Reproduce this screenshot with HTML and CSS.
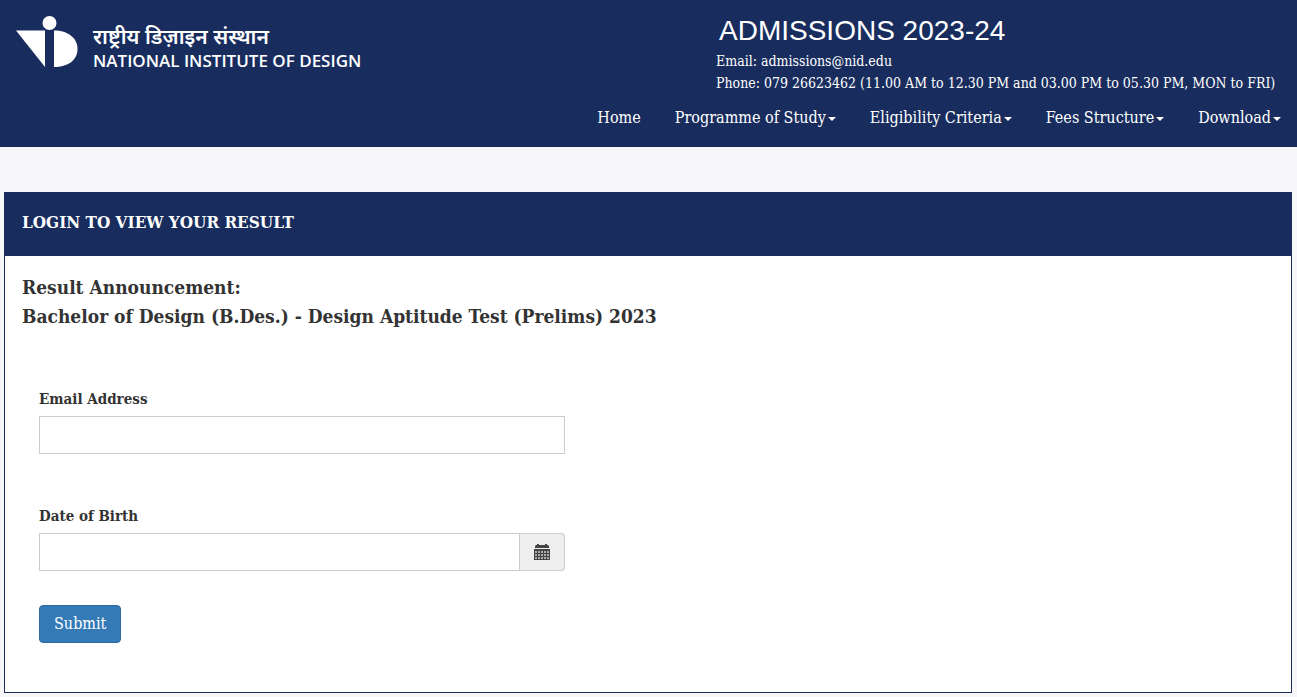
FILE: index.html
```html
<!DOCTYPE html>
<html lang="en">
<head>
  <meta charset="UTF-8" />
  <meta name="viewport" content="width=device-width, initial-scale=1.0"/>
  <title>Admissions 2023-24 - National Institute of Design</title>
  <link rel="stylesheet" href="styles.css">
</head>
<body>
  <header class="site-header">
    <a class="logo" href="#">
      <svg class="logo-mark" viewBox="0 0 62 52" aria-hidden="true">
        <circle cx="33.500" cy="7" r="7"/>
        <path d="M0 14.500H29V51Z"/>
        <path d="M38 14.500C52 14.500 61.500 22 61.500 33S52 51 38 51Z"/>
      </svg>
      <span class="logo-text">
        <span class="logo-hindi" lang="hi">राष्ट्रीय डिज़ाइन संस्थान</span>
        <span class="logo-english">NATIONAL INSTITUTE OF DESIGN</span>
      </span>
    </a>
    <div class="header-right">
      <div class="contact">
        <h1>ADMISSIONS 2023-24</h1>
        <p>Email: admissions@nid.edu</p>
        <p>Phone: 079 26623462 (11.00 AM to 12.30 PM and 03.00 PM to 05.30 PM, MON to FRI)</p>
      </div>
      <nav class="main-nav">
        <a href="#">Home</a>
        <a href="#">Programme of Study<span class="caret"></span></a>
        <a href="#">Eligibility Criteria<span class="caret"></span></a>
        <a href="#">Fees Structure<span class="caret"></span></a>
        <a href="#">Download<span class="caret"></span></a>
      </nav>
    </div>
  </header>

  <main class="panel">
    <h2 class="panel-heading">LOGIN TO VIEW YOUR RESULT</h2>
    <div class="panel-body">
      <h3>Result Announcement:<br>Bachelor of Design (B.Des.) - Design Aptitude Test (Prelims) 2023</h3>
      <form class="login-form">
        <div class="form-group">
          <label for="email">Email Address</label>
          <input type="text" id="email" name="email" />
        </div>
        <div class="form-group">
          <label for="dob">Date of Birth</label>
          <div class="input-group">
            <input type="text" id="dob" name="dob" />
            <button type="button" class="date-btn" aria-label="Choose date">
              <svg viewBox="0 0 16 16" aria-hidden="true">
                <path d="M1 4V2L2 1H3V0H5V1H11V0H13V1H14L15 2V4Z"/>
                <path fill-rule="evenodd" d="M0 5H16V16H0ZM1 7V9H3V7ZM4 7V9H6V7ZM7 7V9H9V7ZM10 7V9H12V7ZM13 7V9H15V7ZM1 10V12H3V10ZM4 10V12H6V10ZM7 10V12H9V10ZM10 10V12H12V10ZM13 10V12H15V10ZM1 13V15H3V13ZM4 13V15H6V13ZM7 13V15H9V13ZM10 13V15H12V13ZM13 13V15H15V13Z"/>
                <path fill-opacity=".4" d="M1 7H15V15H1Z"/>
              </svg>
            </button>
          </div>
        </div>
        <button type="submit" class="btn-primary">Submit</button>
      </form>
    </div>
  </main>
</body>
</html>
```
FILE: styles.css
```css
* { margin: 0; padding: 0; box-sizing: border-box; }

body {
  background-color: #f7f7f9;
  color: #333;
  font-family: "Roboto Slab", "DejaVu Serif Condensed", "DejaVu Serif", serif;
  font-size: 14px;
}

.site-header {
  display: flex;
  justify-content: space-between;
  align-items: flex-start;
  background-color: #182d5e;
  color: white;
  padding: 16px 16px 17px;
}

/* logo */
.logo {
  display: flex;
  gap: 15px;
  color: white;
  text-decoration: none;
  font-family: "Open Sans", "Noto Sans", sans-serif;
}
.logo-mark {
  width: 62px;
  height: 52px;
  fill: white;
}
.logo-text {
  display: flex;
  flex-direction: column;
  padding-top: 6px;
  white-space: nowrap;
}
.logo-hindi {
  font-size: 21px;
  font-weight: 600;
  line-height: 28px;
}
.logo-english {
  font-size: 17px;
  font-weight: 600;
  line-height: 22px;
}

.header-right {
  display: flex;
  flex-direction: column;
  align-items: flex-end;
}
.contact { min-width: 565px; }
.contact h1 {
  padding: 0 3px 4px;
  font-family: "Liberation Sans", Arial, sans-serif;
  font-size: 28px;
  font-weight: normal;
  line-height: 30px;
}
.contact p {
  font-size: 14px;
  line-height: 22px;
}

.main-nav {
  display: flex;
  gap: 34px;
  padding-top: 12px;
}
.main-nav a {
  color: white;
  text-decoration: none;
  font-size: 16px;
  line-height: 24px;
}
.caret {
  display: inline-block;
  margin-left: 2px;
  vertical-align: middle;
  border-top: 4px solid;
  border-left: 4px solid transparent;
  border-right: 4px solid transparent;
}

/* result panel */
.panel {
  margin: 45px 5px 4px 4px;
  border: 1px solid #182d5e;
  background-color: white;
}
.panel-heading {
  background-color: #182d5e;
  color: white;
  padding: 16px 17px 20px;
  font-size: 17px;
  line-height: 27px;
}
.panel-body { padding: 17px 17px 49px; }
h3 {
  font-size: 19px;
  line-height: 29px;
}
.login-form {
  width: 42%;
  margin: 56px 0 0 17px;
}
.form-group { margin-bottom: 50px; }
.form-group:last-of-type { margin-bottom: 34px; }
.form-group label {
  display: block;
  margin-bottom: 5px;
  font-size: 15px;
  font-weight: bold;
  line-height: 24px;
}
.form-group input {
  display: block;
  width: 100%;
  height: 38px;
  padding: 6px 12px;
  border: 1px solid #ccc;
  font: inherit;
}
.input-group { display: flex; }
.date-btn {
  padding: 0 14px;
  border: 1px solid #ccc;
  border-left: none;
  border-radius: 0 4px 4px 0;
  background-color: #eee;
  cursor: pointer;
}
.date-btn svg {
  display: block;
  width: 16px;
  height: 16px;
  fill: #444;
}
.btn-primary {
  background-color: #337ab7;
  color: white;
  border: 1px solid #2e6da4;
  border-radius: 4px;
  padding: 6px 14px;
  font-family: inherit;
  font-size: 16px;
  line-height: 24px;
  cursor: pointer;
}
.btn-primary:hover { background-color: #286090; }
```
